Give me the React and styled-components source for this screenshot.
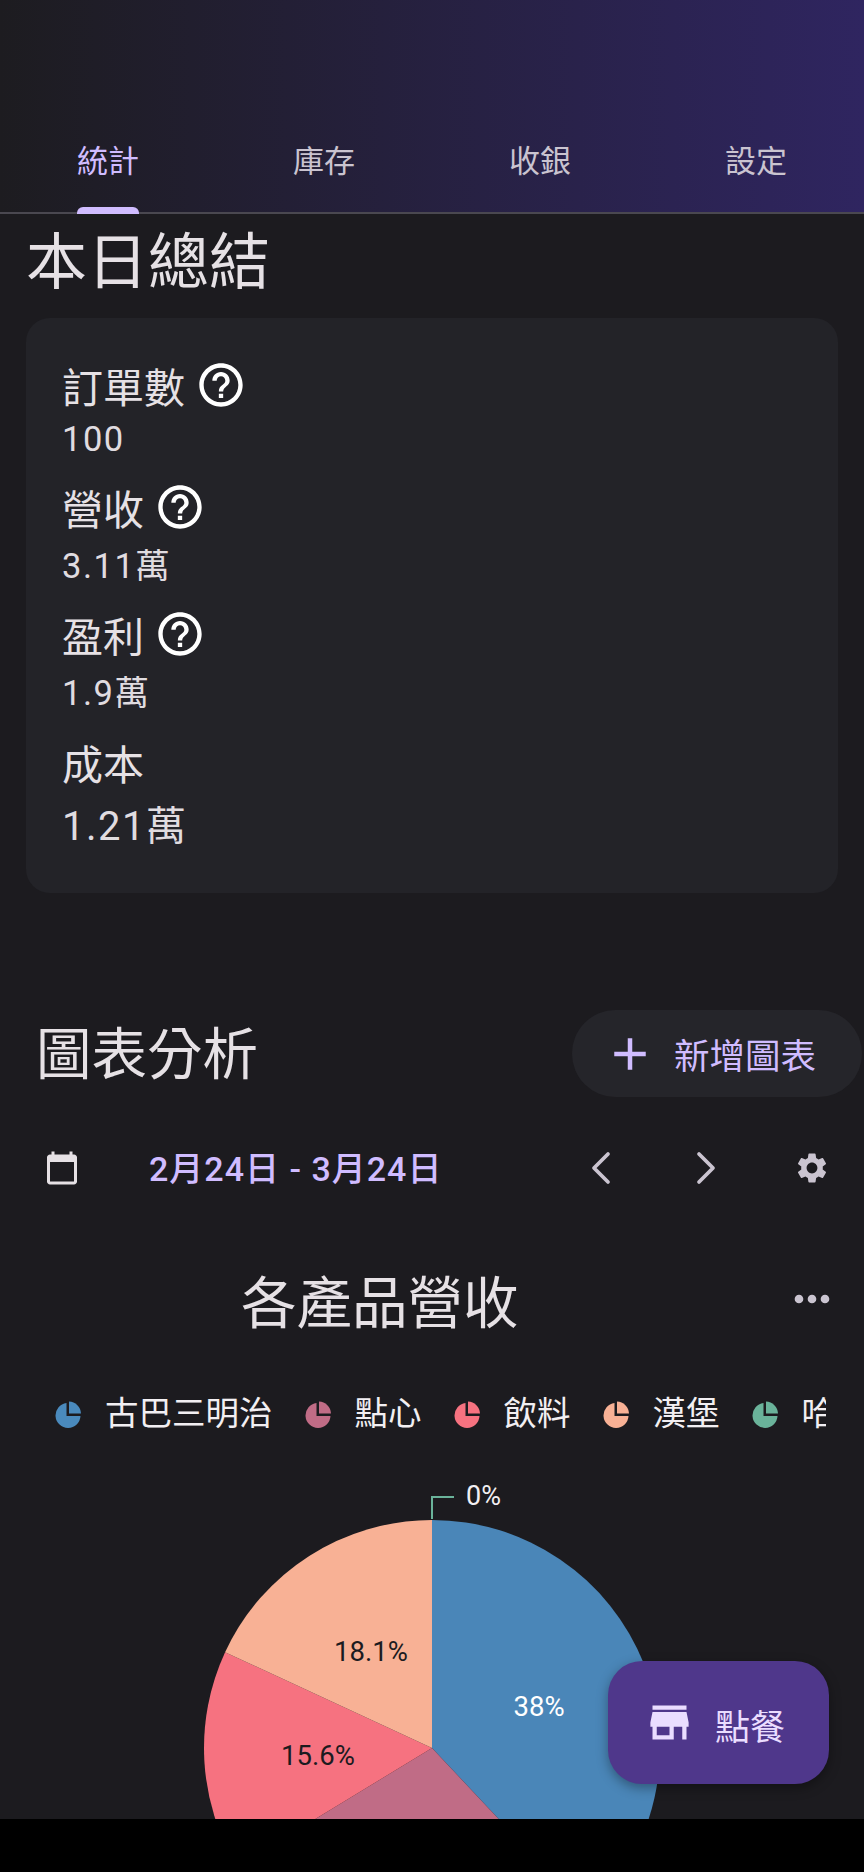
import React from 'react';
import styled, { createGlobalStyle } from 'styled-components';
import { MdAdd, MdCalendarToday, MdHelpOutline, MdMoreHoriz, MdSettings, MdStore } from 'react-icons/md';
import { ChevronLeft, ChevronRight } from 'lucide-react';

const GlobalStyle = createGlobalStyle`
  html, body {
    margin: 0;
    background: #000;
  }
  body {
    font-family: Roboto, "Noto Sans CJK TC", sans-serif;
  }
  #root {
    height: 1872px;
  }
`;

const Screen = styled.div`
  position: relative;
  width: 864px;
  height: 1819px;
  overflow: hidden;
  background: #1c1b1f;
  color: #e6e1e5;
`;

const Header = styled.header`
  box-sizing: border-box;
  height: 214px;
  display: flex;
  align-items: flex-end;
  background: linear-gradient(90deg, #1d1c20 0%, #2f2560 100%);
  border-bottom: 2px solid #4a4850;
`;

const Tabs = styled.nav`
  width: 100%;
  display: grid;
  grid-template-columns: repeat(4, 1fr);
`;

const Tab = styled.div`
  position: relative;
  height: 100px;
  line-height: 100px;
  text-align: center;
  font-size: 31px;
  color: ${(p) => (p.$active ? '#d0bcff' : '#cac4d0')};

  &::after {
    content: '';
    display: ${(p) => (p.$active ? 'block' : 'none')};
    position: absolute;
    left: 77px;
    bottom: -2px;
    width: 62px;
    height: 7px;
    border-radius: 6px 6px 0 0;
    background: #d0bcff;
  }
`;

const PageTitle = styled.h1`
  margin: 13px 0 0 26px;
  font-size: 61px;
  line-height: 72px;
  font-weight: 400;
`;

const Card = styled.section`
  box-sizing: border-box;
  height: 575px;
  margin: 19px 26px 0;
  padding: 39px 36px 0;
  border-radius: 24px;
  background: #232328;
`;

const Metric = styled.div`
  margin-bottom: ${(p) => p.$gap}px;
`;

const MetricLabel = styled.div`
  display: flex;
  align-items: center;
  gap: 10px;
  height: 56px;
  font-size: 41px;
  color: #e6e1e5;

  svg {
    color: #fff;
  }
`;

const MetricValue = styled.div`
  font-size: ${(p) => p.$size}px;
  line-height: ${(p) => p.$height}px;
  letter-spacing: 1.5px;
  color: #e0dce0;
`;

const SectionHead = styled.div`
  display: flex;
  align-items: flex-start;
  justify-content: space-between;
  margin-top: 117px;
  padding: 0 2px 0 36px;
`;

const SectionTitle = styled.h2`
  margin: 0;
  font-size: 55.5px;
  line-height: 92px;
  font-weight: 400;
`;

const AddButton = styled.button`
  box-sizing: border-box;
  width: 290px;
  height: 87px;
  display: flex;
  align-items: center;
  gap: 17px;
  padding: 0 0 0 31px;
  border: 0;
  border-radius: 44px;
  background: #25252a;
  color: #d0bcff;
  font-family: inherit;
  font-size: 35.5px;
`;

const DateRow = styled.div`
  display: flex;
  align-items: center;
  height: 60px;
  margin-top: 36px;
  padding: 0 34px 0 44px;
  color: #e6e1e5;
`;

const DateText = styled.div`
  margin-left: 69px;
  padding-bottom: 4px;
  font-size: 34px;
  font-weight: 500;
  letter-spacing: 1px;
  color: #d0bcff;
`;

const DateNav = styled.div`
  display: flex;
  align-items: center;
  gap: 49px;
  margin-left: auto;
  color: #cac4d0;

  svg {
    display: block;
  }
`;

const GearIcon = styled(MdSettings)`
  margin-left: 11px;
`;

const ChartHead = styled.div`
  display: flex;
  align-items: center;
  height: 80px;
  margin-top: 61px;
  padding: 0 26px 0 241px;
`;

const ChartTitle = styled.h3`
  margin: 0;
  font-size: 55.5px;
  font-weight: 400;
`;

const MoreIcon = styled(MdMoreHoriz)`
  margin-left: auto;
  color: #cac4d0;
`;

const Legend = styled.div`
  display: flex;
  width: 771px;
  height: 48px;
  margin: 51px 0 0 55px;
  overflow: hidden;
`;

const LegendItem = styled.div`
  flex: none;
  display: flex;
  align-items: center;
  gap: 24px;
  margin-right: 32px;
  font-size: 33.5px;
  line-height: 48px;
  color: #f2eff2;
`;

const PieChart = styled.svg`
  display: block;
  font-family: Roboto, sans-serif;
`;

const Fab = styled.button`
  position: absolute;
  right: 35px;
  bottom: 35px;
  box-sizing: border-box;
  width: 221px;
  height: 123px;
  display: flex;
  align-items: center;
  gap: 20px;
  padding: 0 0 0 36px;
  border: 0;
  border-radius: 34px;
  background: #4f378b;
  color: #eaddff;
  font-family: inherit;
  font-size: 35px;
  box-shadow: 0 4px 12px rgba(0, 0, 0, 0.35);
`;

const FabLabel = styled.span`
  position: relative;
  top: 2px;
`;

const tabs = ['統計', '庫存', '收銀', '設定'];

const metrics = [
  { label: '訂單數', value: '100', help: true, size: 34.5, height: 52, gap: 14 },
  { label: '營收', value: '3.11萬', help: true, size: 34.5, height: 62, gap: 9 },
  { label: '盈利', value: '1.9萬', help: true, size: 34.5, height: 62, gap: 10 },
  { label: '成本', value: '1.21萬', help: false, size: 40, height: 74, gap: 0 },
];

const legend = [
  { name: '古巴三明治', color: '#4a8abd' },
  { name: '點心', color: '#c06c86' },
  { name: '飲料', color: '#f67280' },
  { name: '漢堡', color: '#f8b195' },
  { name: '哈密瓜', color: '#6ab39a' },
];

const slices = [
  { share: 38, color: '#4a86b8' },
  { share: 28.3, color: '#c06c86' },
  { share: 15.6, color: '#f67280' },
  { share: 18.1, color: '#f8b195' },
];

const slicePath = (cx, cy, r, from, to) => {
  const point = (pct) => {
    const a = (pct / 100) * Math.PI * 2;
    return `${cx + r * Math.sin(a)} ${cy - r * Math.cos(a)}`;
  };
  return `M${cx} ${cy}L${point(from)}A${r} ${r} 0 ${to - from > 50 ? 1 : 0} 1 ${point(to)}Z`;
};

const LegendIcon = ({ color }) => (
  <svg width="26" height="27" viewBox="0 0 26 27">
    <path fill={color} d="M11.5 2A12.5 12.5 0 1 0 25.5 15H11.5Z" />
    <path fill={color} d="M14 0.5A12.5 12.5 0 0 1 26 12.5H14Z" />
  </svg>
);

const App = () => {
  let start = 0;
  const arcs = slices.map((s) => {
    const d = slicePath(432, 310, 228, start, start + s.share);
    start += s.share;
    return { d, color: s.color };
  });

  return (
    <Screen>
      <GlobalStyle />
      <Header>
        <Tabs>
          {tabs.map((t, i) => (
            <Tab key={t} $active={i === 0}>{t}</Tab>
          ))}
        </Tabs>
      </Header>

      <PageTitle>本日總結</PageTitle>
      <Card>
        {metrics.map((m) => (
          <Metric key={m.label} $gap={m.gap}>
            <MetricLabel>
              {m.label}
              {m.help && <MdHelpOutline size={52} />}
            </MetricLabel>
            <MetricValue $size={m.size} $height={m.height}>{m.value}</MetricValue>
          </Metric>
        ))}
      </Card>

      <SectionHead>
        <SectionTitle>圖表分析</SectionTitle>
        <AddButton>
          <MdAdd size={54} />
          新增圖表
        </AddButton>
      </SectionHead>

      <DateRow>
        <MdCalendarToday size={36} />
        <DateText>2月24日 - 3月24日</DateText>
        <DateNav>
          <ChevronLeft size={56} strokeWidth={1.6} />
          <ChevronRight size={56} strokeWidth={1.6} />
          <GearIcon size={36} />
        </DateNav>
      </DateRow>

      <ChartHead>
        <ChartTitle>各產品營收</ChartTitle>
        <MoreIcon size={52} />
      </ChartHead>

      <Legend>
        {legend.map((l) => (
          <LegendItem key={l.name}>
            <LegendIcon color={l.color} />
            {l.name}
          </LegendItem>
        ))}
      </Legend>

      <PieChart width="864" height="381" viewBox="0 0 864 381">
        {arcs.map((a) => (
          <path key={a.color} d={a.d} fill={a.color} />
        ))}
        <path d="M432 81V59H454" fill="none" stroke="#6ab39a" strokeWidth="2" />
        <text x="466" y="58" fontSize="27" fill="#f2eff2" dominantBaseline="central">0%</text>
        <text x="539" y="268" fontSize="27.5" fill="#fff" textAnchor="middle" dominantBaseline="central">38%</text>
        <text x="371" y="213" fontSize="27.5" fill="#1c1b1f" textAnchor="middle" dominantBaseline="central">18.1%</text>
        <text x="318" y="317" fontSize="27.5" fill="#1c1b1f" textAnchor="middle" dominantBaseline="central">15.6%</text>
      </PieChart>

      <Fab>
        <MdStore size={51} />
        <FabLabel>點餐</FabLabel>
      </Fab>
    </Screen>
  );
};

export default App;
